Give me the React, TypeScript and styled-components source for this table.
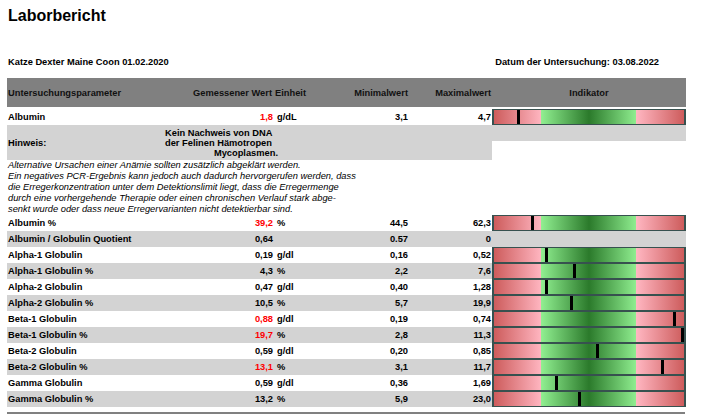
import * as React from "react";
import styled, { createGlobalStyle } from "styled-components";

const GlobalStyle = createGlobalStyle`
  body {
    margin: 0;
    background: #ffffff;
    font-family: "Liberation Sans", Arial, sans-serif;
    color: #000000;
  }
`;

const COLUMNS = "183px 84px 67px 68px 83px 194px";

interface LabRow {
  name: string;
  value: string;
  unit?: string;
  min: string;
  max: string;
  high?: boolean;
  marker?: number; // px from bar's left edge
  shaded?: boolean;
}

const rows: LabRow[] = [
  { name: "Albumin %", value: "39,2", unit: "%", min: "44,5", max: "62,3", high: true, marker: 39 },
  { name: "Albumin / Globulin Quotient", value: "0,64", min: "0.57", max: "0", shaded: true },
  { name: "Alpha-1 Globulin", value: "0,19", unit: "g/dl", min: "0,16", max: "0,52", marker: 53 },
  { name: "Alpha-1 Globulin %", value: "4,3", unit: "%", min: "2,2", max: "7,6", marker: 81, shaded: true },
  { name: "Alpha-2 Globulin", value: "0,47", unit: "g/dl", min: "0,40", max: "1,28", marker: 53 },
  { name: "Alpha-2 Globulin %", value: "10,5", unit: "%", min: "5,7", max: "19,9", marker: 78, shaded: true },
  { name: "Beta-1 Globulin", value: "0,88", unit: "g/dl", min: "0,19", max: "0,74", high: true, marker: 181 },
  { name: "Beta-1 Globulin %", value: "19,7", unit: "%", min: "2,8", max: "11,3", high: true, marker: 189, shaded: true },
  { name: "Beta-2 Globulin", value: "0,59", unit: "g/dl", min: "0,20", max: "0,85", marker: 104 },
  { name: "Beta-2 Globulin %", value: "13,1", unit: "%", min: "3,1", max: "11,7", high: true, marker: 169, shaded: true },
  { name: "Gamma Globulin", value: "0,59", unit: "g/dl", min: "0,36", max: "1,69", marker: 63 },
  { name: "Gamma Globulin %", value: "13,2", unit: "%", min: "5,9", max: "23,0", marker: 86, shaded: true },
];

const Page = styled.div`
  width: 679px;
  padding: 0 17px 0 7px;
`;

const Title = styled.h1`
  margin: 0;
  padding: 7px 0 0 1px;
  font-size: 16px;
  line-height: 18px;
  font-weight: 700;
`;

const InfoLine = styled.div`
  display: flex;
  justify-content: space-between;
  margin-top: 32px;
  padding: 0 27px 0 1px;
  font-size: 9.3px;
  font-weight: 700;
  line-height: 11px;
`;

const Table = styled.div`
  margin-top: 10px;
`;

const HeaderRow = styled.div`
  display: grid;
  grid-template-columns: ${COLUMNS};
  height: 29px;
  align-items: center;
  background: #808080;
  font-size: 9.3px;
  font-weight: 700;
  color: #111111;
`;

const Row = styled.div<{ $shaded?: boolean; $top?: number }>`
  display: grid;
  grid-template-columns: ${COLUMNS};
  height: 16px;
  margin-top: ${(p) => p.$top ?? 0}px;
  align-items: center;
  background: ${(p) => (p.$shaded ? "#d3d3d3" : "transparent")};
  font-size: 9.3px;
  font-weight: 700;
  line-height: 16px;
`;

const Cell = styled.div<{ $align?: "left" | "right" | "center"; $pad?: string }>`
  text-align: ${(p) => p.$align ?? "left"};
  padding: ${(p) => p.$pad ?? "0"};
  white-space: nowrap;
`;

const Value = styled(Cell)<{ $high?: boolean }>`
  color: ${(p) => (p.$high ? "#ff0000" : "#000000")};
`;

const Bar = styled.div`
  position: relative;
  height: 16px;
  box-sizing: border-box;
  border-style: solid;
  border-color: #37514f;
  border-width: 1px 2px;
  background: linear-gradient(
    to right,
    #cd5c5c 0%,
    #ffb6c1 25%,
    #90ee90 25%,
    #2b7a2b 50%,
    #90ee90 75%,
    #ffb6c1 75%,
    #cd5c5c 100%
  );
`;

const Marker = styled.div`
  position: absolute;
  top: 0;
  bottom: 0;
  width: 3px;
  background: #000000;
`;

const GreyCell = styled.div`
  height: 16px;
  background: #d3d3d3;
`;

const NoteRow = styled.div`
  display: grid;
  grid-template-columns: 485px 194px;
  align-items: start;
`;

const NoteBox = styled.div`
  display: flex;
  align-items: center;
  height: 35px;
  background: #d3d3d3;
  font-size: 9.3px;
  font-weight: 700;
  line-height: 10px;
`;

const NoteLabel = styled.div`
  width: 158px;
  padding-left: 1px;
  box-sizing: border-box;
`;

const NoteText = styled.div`
  width: 113px;
  text-align: right;
`;

const NoteLine = styled.span<{ $inset?: boolean }>`
  display: block;
  padding-right: ${(p) => (p.$inset ? 7 : 0)}px;
  white-space: nowrap;
`;

const Remark = styled.p`
  margin: 0;
  padding-left: 1px;
  font-size: 9.3px;
  font-style: italic;
  line-height: 11px;
`;

const BottomRule = styled.div`
  margin-top: 5px;
  height: 2px;
  width: 678px;
  background: #808080;
`;

const Indicator: React.FC<{ marker?: number }> = ({ marker }) =>
  marker === undefined ? (
    <GreyCell />
  ) : (
    <Bar>
      <Marker style={{ left: `${marker - 2}px` }} />
    </Bar>
  );

const DataRow: React.FC<{ row: LabRow; top?: number }> = ({ row, top }) => (
  <Row $shaded={row.shaded} $top={top}>
    <Cell $pad="0 0 0 1px">{row.name}</Cell>
    <Value $align="right" $pad="0 1px 0 0" $high={row.high}>
      {row.value}
    </Value>
    <Cell $pad="0 0 0 3px">{row.unit ?? ""}</Cell>
    <Cell $align="right" $pad="0 1px 0 0">
      {row.min}
    </Cell>
    <Cell $align="right" $pad="0 1px 0 0">
      {row.max}
    </Cell>
    <Indicator marker={row.marker} />
  </Row>
);

export default function App() {
  return (
    <Page>
      <GlobalStyle />
      <Title>Laborbericht</Title>
      <InfoLine>
        <span>Katze Dexter Maine Coon 01.02.2020</span>
        <span>Datum der Untersuchung: 03.08.2022</span>
      </InfoLine>
      <Table>
        <HeaderRow>
          <Cell $pad="0 0 0 1px">Untersuchungsparameter</Cell>
          <Cell $align="right" $pad="0 2px 0 0">
            Gemessener Wert
          </Cell>
          <Cell $pad="0 0 0 1px">Einheit</Cell>
          <Cell $align="right" $pad="0 1px 0 0">
            Minimalwert
          </Cell>
          <Cell $align="right" $pad="0 1px 0 0">
            Maximalwert
          </Cell>
          <Cell $align="center">Indikator</Cell>
        </HeaderRow>
        <DataRow
          top={2}
          row={{ name: "Albumin", value: "1,8", unit: "g/dL", min: "3,1", max: "4,7", high: true, marker: 25 }}
        />
        <NoteRow>
          <NoteBox>
            <NoteLabel>Hinweis:</NoteLabel>
            <NoteText>
              <NoteLine $inset>Kein Nachweis von DNA</NoteLine>
              <NoteLine $inset>der Felinen Hämotropen</NoteLine>
              <NoteLine>Mycoplasmen.</NoteLine>
            </NoteText>
          </NoteBox>
          <GreyCell />
        </NoteRow>
        <Remark>
          Alternative Ursachen einer Anämie sollten zusätzlich abgeklärt werden.
          <br />
          Ein negatives PCR-Ergebnis kann jedoch auch dadurch hervorgerufen werden, dass
          <br />
          die Erregerkonzentration unter dem Detektionslimit liegt, dass die Erregermenge
          <br />
          durch eine vorhergehende Therapie oder einen chronischen Verlauf stark abge-
          <br />
          senkt wurde oder dass neue Erregervarianten nicht detektierbar sind.
        </Remark>
        {rows.map((row) => (
          <DataRow key={row.name} row={row} />
        ))}
        <BottomRule />
      </Table>
    </Page>
  );
}
